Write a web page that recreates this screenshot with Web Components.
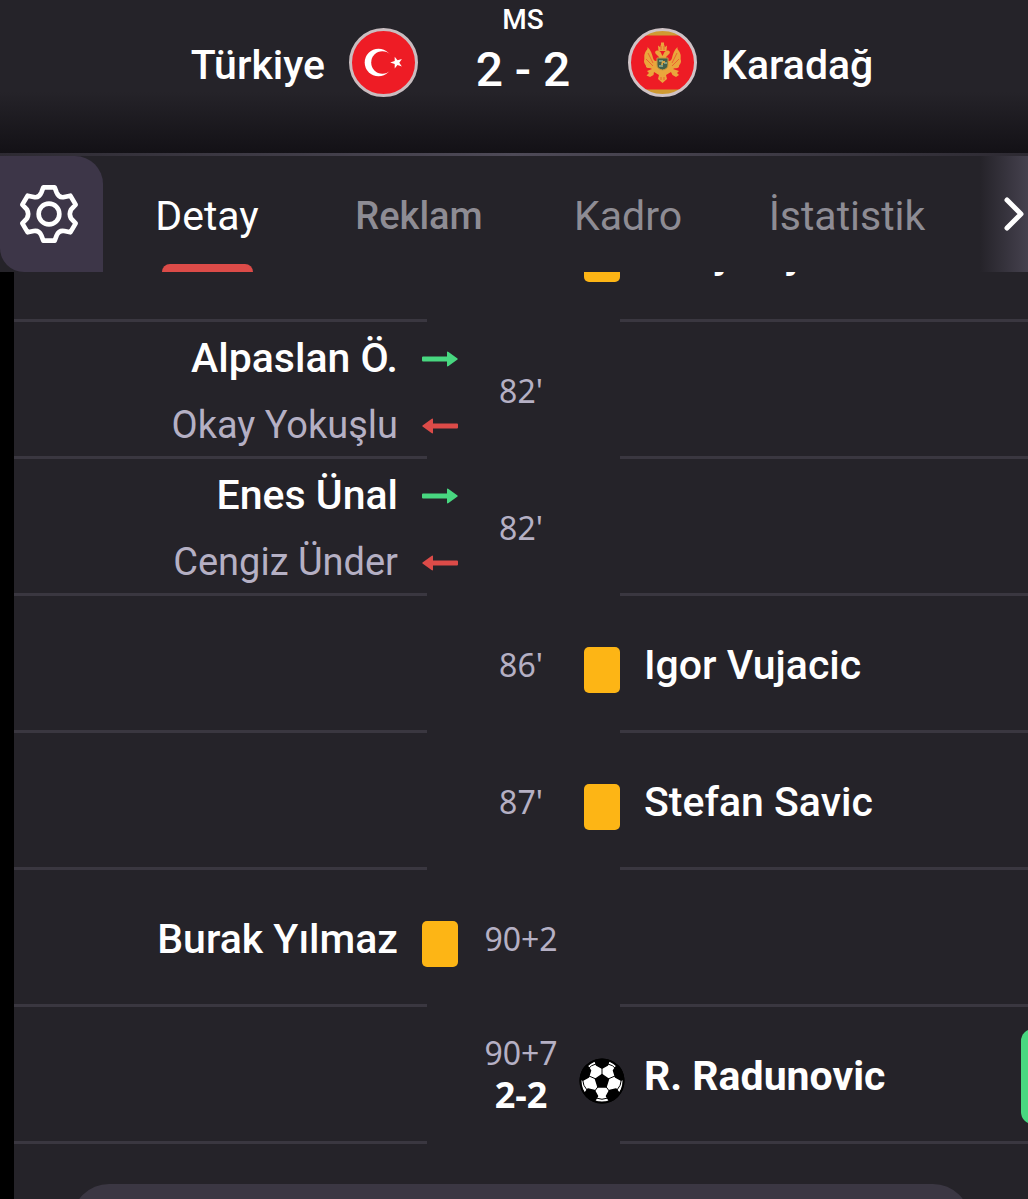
<!DOCTYPE html>
<html lang="tr">
<head>
<meta charset="utf-8">
<meta name="viewport" content="width=device-width, initial-scale=1">
<title>Türkiye - Karadağ</title>
<style>
  html, body {
    height: 100%;
    margin: 0;
    background: #000;
  }

  body {
    font-family: Roboto, "Open Sans", sans-serif;
    color: #fff;

    --surface: #252329;
    --raised:  #3d3648;
    --panel:   #3b3743;
    --line:    #3a3740;
    --muted:   #b5b0c4;
    --dim:     #8e8c94;
    --red:     #dc4b48;
    --green:   #48d780;
    --yellow:  #fdb515;
  }
</style>
</head>
<body>

<match-page>
  <match-header slot="header" status="MS" score="2 - 2">
    <team-badge slot="home" flag="tr">Türkiye</team-badge>
    <team-badge slot="away" flag="me" reverse>Karadağ</team-badge>
  </match-header>

  <tab-bar slot="tabs"></tab-bar>

  <match-event side="away" icon="card" minute="79'">Marja Njezic</match-event>
  <match-event side="home" icon="sub" minute="82'">Alpaslan Ö.<span slot="off">Okay Yokuşlu</span></match-event>
  <match-event side="home" icon="sub" minute="82'">Enes Ünal<span slot="off">Cengiz Ünder</span></match-event>
  <match-event side="away" icon="card" minute="86'">Igor Vujacic</match-event>
  <match-event side="away" icon="card" minute="87'">Stefan Savic</match-event>
  <match-event side="home" icon="card" minute="90+2">Burak Yılmaz</match-event>
  <match-event side="away" icon="goal" minute="90+7" score="2-2">R. Radunovic</match-event>
</match-page>

<script>
const flags = {
  tr: `<svg viewBox="0 0 69 69" aria-hidden="true">
    <circle cx="34.5" cy="34.5" r="33" fill="#ee1c25"/>
    <circle cx="29.5" cy="34.5" r="13.8" fill="#fff"/>
    <circle cx="33.4" cy="34.5" r="11.2" fill="#ee1c25"/>
    <path fill="#fff" d="M41.2 34.6 45.7 33.1 45.7 28.7 48.5 32.3 52.9 31 50.3 34.7 52.9 38.4 48.5 37 45.7 40.6 45.7 36.1Z"/>
    <circle cx="34.5" cy="34.5" r="33" fill="none" stroke="#c9bdc0" stroke-width="3"/>
  </svg>`,

  me: `<svg viewBox="0 0 69 69" aria-hidden="true">
    <clipPath id="disc"><circle cx="34.5" cy="34.5" r="33"/></clipPath>
    <g clip-path="url(#disc)">
      <path fill="#cf9a32" d="M0 0H69V69H0Z"/>
      <path fill="#ee1c25" d="M0 7.5H69V61.5H0Z"/>
    </g>
    <g fill="#eaa63c">
      <path d="M32.5 24C29 21 26 23 27.5 25.500L31 29C30 34 26 34 25 30C24 26 23 22 19.500 19C20 22 18 22 17 25C15.500 28 17 30 16 33C16 36 18.500 37 18 39C20 41 22 39.500 24 41L19 43 21 45 18.500 47.500 22 49 25.500 47 26 44 31 47 30 51 34.500 55 39 51 38 47 43 44 44.500 47 48 49 51 47 49 45 51 43 45 41C47 39.500 49 41 51 39C50.500 37 53 36 53 33C52 30 53.500 28 52 25C51 22 49 22 49.500 19C46 22 45 26 44 30C43 34 39 34 38 29L41.500 25.500C43 23 40 21 36.500 24L34.500 28Z"/>
      <path d="M30 17.500 32 19 33 16.500V14.500H36V16.500L37 19 39 17.500 38.500 23H30.500Z"/>
    </g>
    <path fill="none" stroke="#ee1c25" stroke-width=".5" d="M20 25 25 35M18 31 25 38M49 25 44 35M51 31 44 38M33 18V22M36 18V22M33 49V52M36 49V52"/>
    <path fill="#44604a" stroke="#c9973c" d="M29 30H40V37Q40 41 34.500 42Q29 41 29 37Z"/>
    <path fill="#809d83" d="M31 32H35V34H31ZM36 34H39V36H36ZM31 37H35V39H31Z"/>
    <path fill="#d2a447" d="M34 33H37V35H35V37H33Z"/>
    <circle cx="34.5" cy="34.5" r="33" fill="none" stroke="#cfc3c6" stroke-width="3"/>
  </svg>`,
};

const icons = {
  card: `<svg class="card" viewBox="0 0 36 46" role="img" aria-label="Sarı kart">
    <rect width="36" height="46" rx="5" fill="var(--yellow)"/>
  </svg>`,

  goal: `<svg class="ball" viewBox="0 0 46 46" role="img" aria-label="Gol">
    <circle cx="23" cy="23" r="22.500" fill="#000"/>
    <circle cx="23" cy="23" r="21" fill="#fff"/>
    <path stroke="#000" stroke-width="1.500" stroke-linejoin="round" d="M23 16.500 29.500 21 27 29H19L16.500 21ZM16 2.800Q23 .5 30 2.800L28.500 7 23 10 17.500 7ZM2 17Q4 10 8 7.500L11.500 12.500 9.500 19 4 22 1.500 21ZM44 17Q42 10 38 7.500L34.500 12.500 36.500 19 42 22 44.500 21ZM6 35 9 31 15.500 32.500 18.500 38 15.500 43Q9 40 6 35ZM40 35 37 31 30.500 32.500 27.500 38 30.500 43Q37 40 40 35Z"/>
    <path fill="none" stroke="#000" stroke-width="1" d="M23 17V9M29 21 36 18M17 21 10 18M26.500 28 31 34M19.500 28 15 34M17 6Q12 7 9 11M29 6Q34 7 37 11M3.500 21Q4 28 8 32M42.500 21Q42 28 38 32M17 40Q23 42.500 29 40"/>
    <circle cx="23" cy="23" r="21.500" fill="none" stroke="#000" stroke-width="2"/>
  </svg>`,

  on: `<svg class="arrow" viewBox="0 0 36 16" role="img" aria-label="Giren">
    <path fill="var(--green)" d="M1 5.500H25V1.500Q25 0 26.500 1L35.500 7.500Q36 8 35.500 8.500L26.500 15Q25 16 25 14.500V10.500H1Q0 10.500 0 9.500V6.500Q0 5.500 1 5.500Z"/>
  </svg>`,

  off: `<svg class="arrow" viewBox="0 0 36 16" role="img" aria-label="Çıkan">
    <path fill="var(--red)" d="M35 5.500H11V1.500Q11 0 9.500 1L.5 7.500Q0 8 .5 8.500L9.500 15Q11 16 11 14.500V10.500H35Q36 10.500 36 9.500V6.500Q36 5.500 35 5.500Z"/>
  </svg>`,
};

class TeamBadge extends HTMLElement {
  connectedCallback () {
    this.attachShadow({mode: "open"}).innerHTML = `<style>
      :host {
        display: flex;
        align-items: center;
        justify-content: flex-end;
        gap: 24px;
        font-size: 41px;
        font-weight: 500;
        line-height: 48px;
      }

      :host([reverse]) {
        flex-direction: row-reverse;
      }

      span {
        padding-top: 4px;
      }

      svg {
        display: block;
        flex: none;
        width: 69px;
        height: 69px;
      }
    </style>
    <span><slot></slot></span>
    ${flags[this.getAttribute("flag")]}`;
  }
}

class MatchHeader extends HTMLElement {
  connectedCallback () {
    this.attachShadow({mode: "open"}).innerHTML = `<style>
      :host {
        display: grid;
        grid-template-columns: 1fr 210px 1fr;
        box-sizing: border-box;
        min-height: 153px;
        padding-left: 18px;
        background: linear-gradient(var(--surface) 60%, #131116);
      }

      ::slotted(team-badge) {
        align-self: start;
        padding-top: 28px;
      }

      .result {
        text-align: center;
        font-weight: 500;
      }

      .status {
        font-size: 28px;
        line-height: 40px;
      }

      .score {
        font-size: 48px;
        line-height: 60px;
      }
    </style>
    <slot name="home"></slot>
    <div class="result">
      <div class="status">${this.getAttribute("status")}</div>
      <div class="score">${this.getAttribute("score")}</div>
    </div>
    <slot name="away"></slot>`;
  }
}

class TabBar extends HTMLElement {
  connectedCallback () {
    this.attachShadow({mode: "open"}).innerHTML = `<style>
      :host {
        display: grid;
        grid-template-columns: 103px 1fr 48px;
        border-top: 3px solid;
        border-image: linear-gradient(to right, #2d2a32, #4e4a57 50%, #2d2a32) 1;
        height: 116px;
        background: var(--surface);
      }

      button {
        display: grid;
        place-items: center;
        margin: 0;
        padding: 0;
        border: 0;
        background: none;
        color: inherit;
        font: inherit;
      }

      svg {
        display: block;
      }

      .settings {
        border-radius: 0 28px 0 24px;
        background: var(--raised);
        justify-items: start;
        padding-left: 19px;
      }

      nav {
        display: grid;
        grid-template-columns: 208fr 216fr 202fr 236fr;
        margin-right: 15px;
      }

      nav button {
        position: relative;
        padding-top: 4px;
        color: var(--dim);
        font-size: 41px;
      }

      nav .sponsored {
        font-size: 38px;
        font-weight: 500;
      }

      nav [aria-current] {
        color: #fff;
      }

      nav [aria-current]::after {
        content: "";
        position: absolute;
        bottom: 0;
        width: 91px;
        height: 8px;
        border-radius: 8px 8px 0 0;
        background: var(--red);
      }

      .next {
        justify-items: end;
        padding-right: 3px;
        background: linear-gradient(to right, var(--surface), #45414e);
      }
    </style>
    <button class="settings" aria-label="Ayarlar">
      <svg width="60" height="62" viewBox="58 129 180 186" fill="none" stroke="#fff" stroke-width="14" stroke-linejoin="round">
        <path d="M131 142H165L171 158Q178 175 194 171L212 167 228 194 214 209Q207 222 214 235L228 250 212 277 194 273Q178 270 171 286L165 302H131L125 286Q118 270 102 273L84 277 68 250 82 235Q89 222 82 209L68 194 84 167 102 171Q118 175 125 158Z"/>
        <circle cx="148" cy="222" r="31"/>
      </svg>
    </button>
    <nav>
      <button aria-current="page">Detay</button>
      <button class="sponsored">Reklam</button>
      <button>Kadro</button>
      <button>İstatistik</button>
    </nav>
    <button class="next" aria-label="Sonraki">
      <svg width="22" height="36" viewBox="0 0 22 36" fill="none" stroke="#fff" stroke-width="5" stroke-linecap="round" stroke-linejoin="round">
        <path d="M4 4 18 18 4 32"/>
      </svg>
    </button>`;
  }
}

class MatchEvent extends HTMLElement {
  connectedCallback () {
    const icon  = this.getAttribute("icon");
    const score = this.getAttribute("score");
    const sub   = icon === "sub";

    this.attachShadow({mode: "open"}).innerHTML = `<style>
      :host {
        display: grid;
        grid-template-columns: 1fr 126px 1fr;
        align-items: center;
        min-height: 137px;
        overflow: hidden;

        /* divider, open around the minute column */
        background:
          linear-gradient(var(--line) 0 0) left  bottom / calc(50% - 94px) 3px no-repeat,
          linear-gradient(var(--line) 0 0) right bottom / calc(50% - 99px) 3px no-repeat;
      }

      .side {
        grid-row: 1;
        grid-column: 3;
        padding-top: 2px;
      }

      :host([side="home"]) .side {
        grid-column: 1;
      }

      .player {
        display: flex;
        align-items: center;
        gap: 24px;
        font-size: 41px;
        font-weight: 500;
        line-height: 67px;
        white-space: nowrap;
      }

      :host([side="home"]) .player {
        flex-direction: row-reverse;
      }

      :host([icon="goal"]) .player {
        font-weight: 700;
      }

      .player.off {
        color: var(--muted);
        font-size: 38px;
        font-weight: 400;
      }

      svg {
        display: block;
        flex: none;
      }

      .card, .ball {
        padding-top: 8px;
      }

      .card {
        width: 36px;
        height: 46px;
      }

      .ball {
        width: 46px;
        height: 46px;
        margin: 0 -5px;
      }

      .arrow {
        width: 36px;
        height: 16px;
        padding-top: 2px;
      }

      .time {
        grid-row: 1;
        grid-column: 2;
        text-align: center;
        color: var(--muted);
        font-family: "Noto Sans", "Open Sans", sans-serif;
        font-size: 32px;
        line-height: 42px;
      }

      .score {
        display: block;
        padding-bottom: 4px;
        color: #fff;
        font-size: 36px;
        font-weight: 700;
      }

      .goal-mark {
        margin-left: auto;
        margin-right: -33px;
        width: 40px;
        height: 95px;
        border-radius: 12px;
        background: var(--green);
      }
    </style>
    <div class="side">
      <div class="player">
        ${icons[sub ? "on" : icon]}
        <span><slot></slot></span>
        ${icon === "goal" ? `<div class="goal-mark"></div>` : ""}
      </div>
      ${sub ? `<div class="player off">${icons.off}<slot name="off"></slot></div>` : ""}
    </div>
    <div class="time">
      ${this.getAttribute("minute")}
      ${score ? `<strong class="score">${score}</strong>` : ""}
    </div>`;
  }
}

class MatchPage extends HTMLElement {
  connectedCallback () {
    this.attachShadow({mode: "open"}).innerHTML = `<style>
      :host {
        display: flex;
        flex-direction: column;
        height: 100vh;
        background: var(--surface);
      }

      .events {
        flex: 1;
        min-height: 0;
        overflow-y: auto;
        scrollbar-width: none;
        border-left: 14px solid #000;
      }

      .panel {
        height: 160px;
        margin: 40px 58px 0;
        border-radius: 37px;
        background: var(--panel);
      }
    </style>
    <slot name="header"></slot>
    <slot name="tabs"></slot>
    <div class="events">
      <slot></slot>
      <div class="panel"></div>
    </div>`;

    // Open part way down the list, on the closing minutes
    this.shadowRoot.querySelector(".events").scrollTop = 87;
  }
}

customElements.define("team-badge", TeamBadge);
customElements.define("match-header", MatchHeader);
customElements.define("tab-bar", TabBar);
customElements.define("match-event", MatchEvent);
customElements.define("match-page", MatchPage);
</script>
</body>
</html>
